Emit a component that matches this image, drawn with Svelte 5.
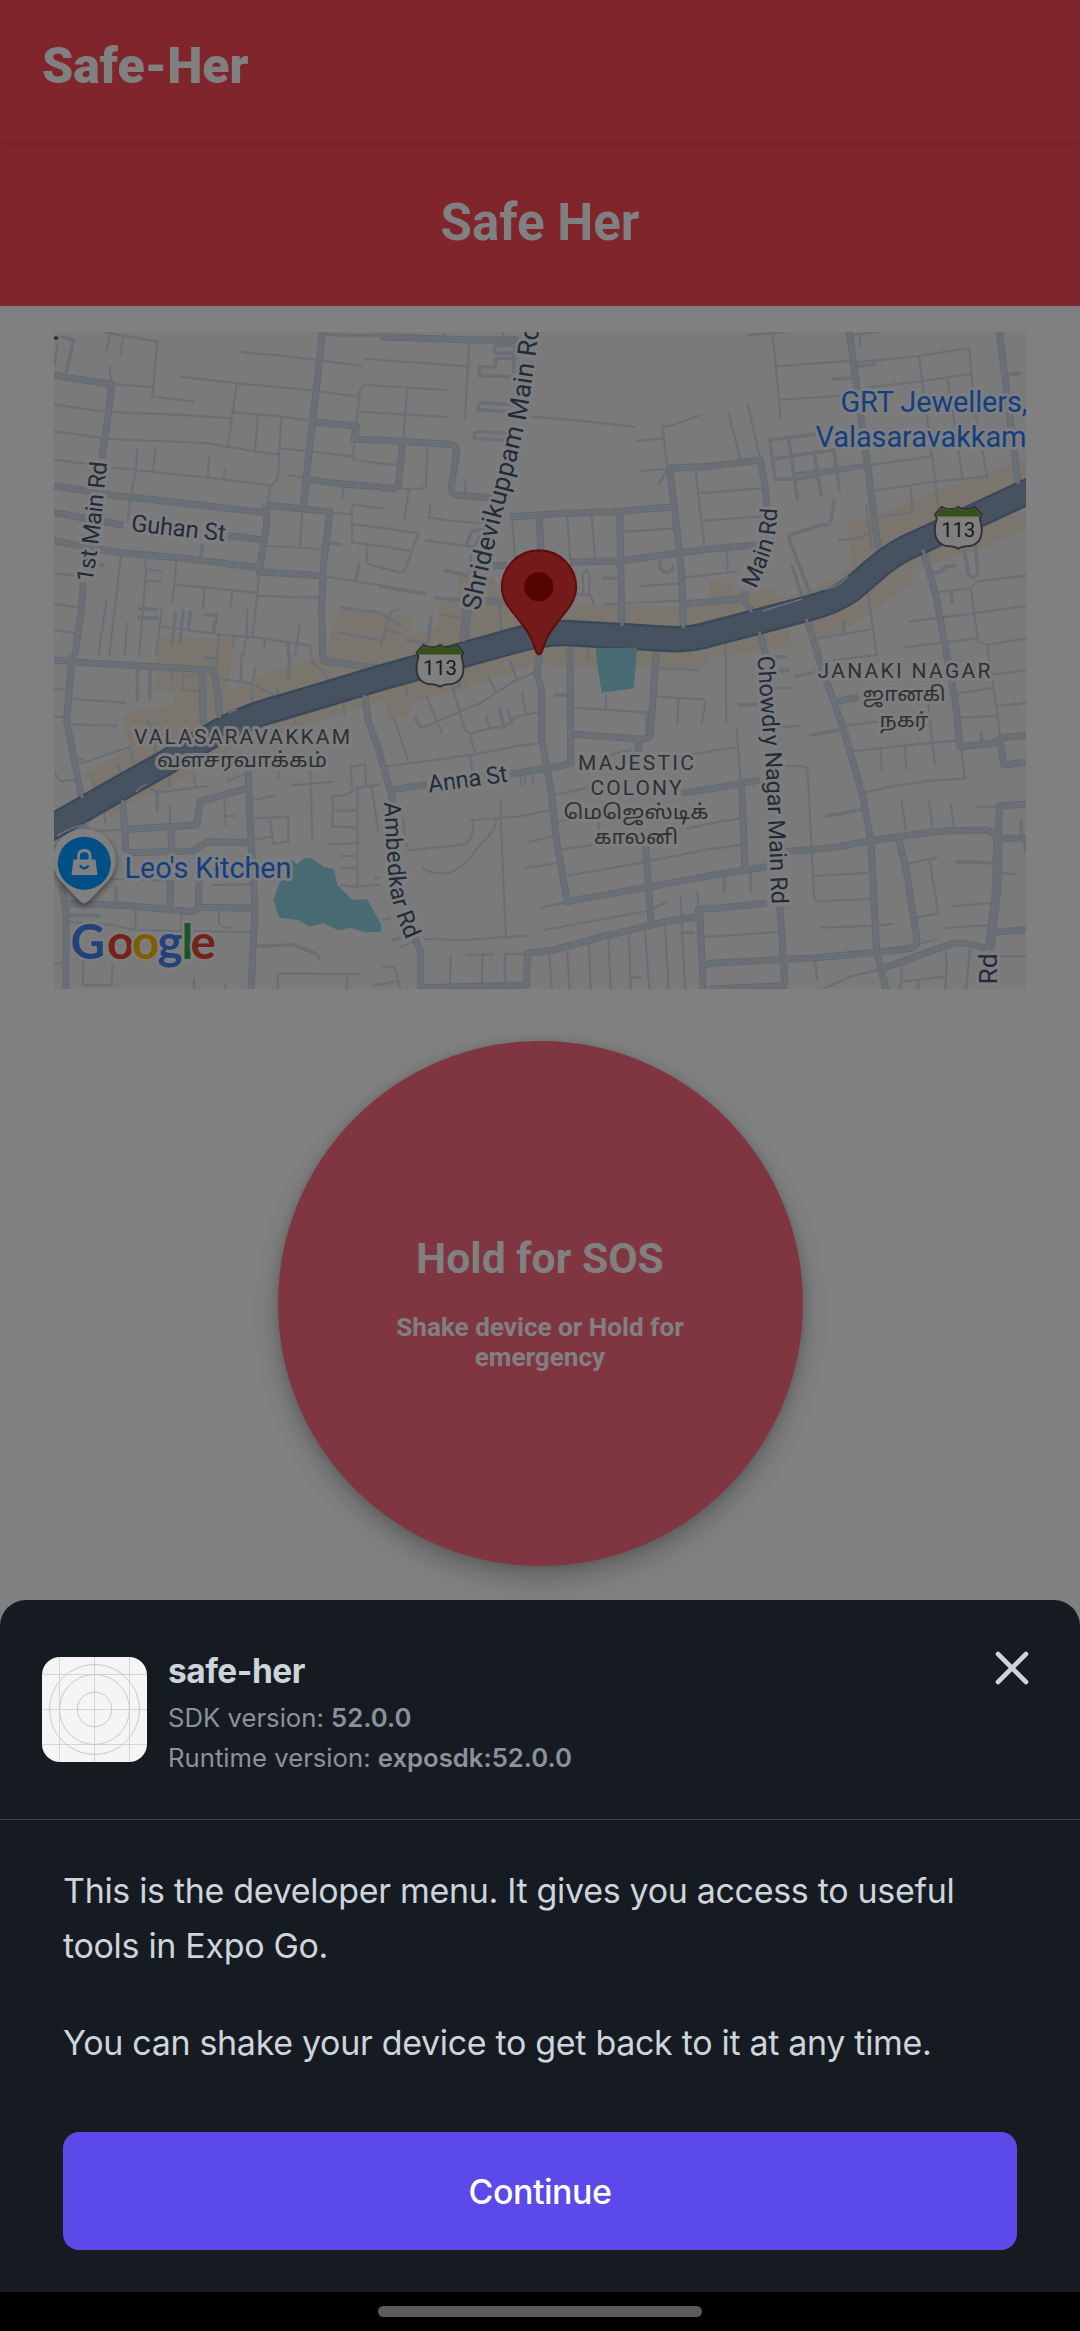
<script>
  // Street geometry, stored per map tile. Each tile is 330px wide and drawn on a 3x grid.
  const tiles = [
    {
      x: 50, y: 325,
      major: 'M12 148L60 160L185 177L175 270L155 400M100 775L95 850L75 990M818 20L795 230L775 400L760 550M12 482L200 512L400 535L650 563M12 563L220 600M535 632L640 645M12 648L200 682L400 700L628 728M648 540L840 560L820 720L815 850L818 992M648 540L650 600L628 740L815 752M785 290L920 303L912 343L990 346M770 462L850 475L990 485',
      mid: 'M818 28L930 32L990 30M35 35L70 45L50 140M838 655L872 658M926 718L918 770M457 662L450 700M268 852L320 853M266 877L320 880M377 865L365 960M399 858L390 955M421 862L415 915M468 870L500 870L490 925M150 720L160 721M715 950L715 990',
      minor: 'M165 22L180 25L322 50L307 215L430 229M180 25L170 75M219 35L211 88M178 123L185 175M195 178L305 186M22 60L14 120M568 81L700 92L935 123M391 155L560 175L780 195L928 216M990 182L940 180L930 195L918 300M947 102L990 104M928 260L990 264M560 175L545 280L533 368M12 238L160 260L420 271L545 280M552 262L700 275L780 288M624 270L615 378M693 278L685 440Q680 478 660 480L655 530M12 319L180 342L465 354L620 380L683 389M690 370L780 379L910 395M912 350L910 405L990 415M12 404L120 418M190 428L400 450L660 480M262 370L257 440L243 510L232 590M317 371L309 438M477 400L473 458M524 430L519 464M713 450L765 458M880 490L876 520M756 565L750 668M650 663L820 672M840 563L903 567M990 550L915 540Q905 540 905 560L907 652L990 664M907 598L990 607M952 660L950 715L990 727M828 755L990 780M12 745L85 752M213 690L195 850L178 990M286 700L288 740L268 990M290 733L335 738M288 767L333 770M380 708L367 832M372 778L620 803M462 790L460 850M547 800L541 845M628 745L608 935M625 813L805 818M12 836L85 847M12 915L75 925M170 823L145 990M231 895L225 990M336 847L318 990M327 903L520 930L620 938L780 962L782 990M592 850L590 930L580 990M508 928L500 990M553 930L549 965M645 940L643 970M750 898L735 990M873 848L990 863M867 922L990 947'
    },
    {
      x: 380, y: 325,
      major: 'M0 35L270 45L415 45M0 345L200 358Q235 360 230 380L213 490Q215 510 250 512L340 518M68 355L55 480Q50 492 30 490L0 488M390 575L560 565L700 560L885 545M862 430L990 424M868 430L885 560L905 750L910 902M477 570L483 680M719 565L722 700L725 898M340 722L380 720M570 712L720 707L900 683L990 672M320 828L380 828M990 830L915 836M258 850L248 950M264 850L254 950M570 960L570 992M828 975L828 992',
      mid: 'M415 60L355 60Q342 62 342 75Q342 85 355 85L410 85M405 100L350 100L345 125L300 125L297 152L400 155M400 238L305 233Q292 240 294 255L400 260M380 325L290 320Q280 325 282 340L375 345M320 612L275 618L260 660M198 737L260 750M0 783L135 807M165 818L240 825M670 760L715 760M839 708Q838 742 860 742Q878 742 878 725M152 880L145 950M80 945L140 957M405 60L400 140',
      minor: 'M0 105L268 124M268 50L255 278M0 183L205 195M82 188L70 345M0 264L198 276M452 275L600 287L763 306M960 271L878 300L848 305L862 425M770 348L848 340M780 438L862 432L835 480M142 370L138 480Q135 492 110 492L65 490M87 492L73 585M257 470L255 500M0 415L55 420M0 550L8 550M151 535L147 577L210 587L300 595M138 647L280 665M0 607L115 625L75 735Q68 745 50 740L0 728M0 663L93 678M310 615L275 680L268 740M397 585L405 700M562 575L570 700M635 570L645 695M735 620L885 610M947 435L960 560L973 660M958 503L990 503M970 587L990 587M780 784L895 775M912 757L990 750M670 838L900 827M610 810L608 750Q618 722 628 750L628 810M590 808L632 812L643 840M358 838L365 920M180 868L240 878M0 865L65 900M0 970L30 870Q35 855 55 855M15 915L60 925M628 960L620 990M930 970L930 990M193 22L193 30M370 22L370 35'
    },
    {
      x: 710, y: 325,
      major: 'M0 424L150 405L165 480L170 545M0 672L140 660M418 20L450 260L470 400L505 672M868 20L890 200L924 472M0 830L100 820L125 860M110 800L100 820M640 675L680 820L710 992M290 880L325 992M148 920L168 992',
      mid: 'M370 162L425 160M440 125L495 118M315 328L180 345L195 463L260 463L460 425M190 402L310 383L370 375M235 335L262 520M312 380L333 510M372 375L388 495M250 448L460 420M372 525Q365 595 355 600L330 600L245 628Q232 632 240 650L303 812M247 725L278 820M895 150L928 145M670 745L695 740L705 725L733 722M762 670L775 745Q790 770 803 745L797 665M722 797L726 832M400 890L402 925',
      minor: 'M115 30L185 25L230 20M188 28L205 200L211 280M203 124L420 107M440 112L627 93L777 69L785 150L800 290L832 455L673 470L492 498M213 224L385 213M450 35L450 60M430 30L505 20M627 93L650 270L685 545M480 187L635 168L785 147M712 157L735 300L757 460M57 268L90 400M113 238L150 400M485 420L660 395M601 483L608 555L600 563L510 574M485 670L468 540L480 532M387 646L450 637L490 615M0 502L155 490M0 585L160 574M50 680L53 742M0 748L80 740M473 795L500 990M325 940L490 912M683 803L780 790L800 770L948 752M600 889L790 865L948 842M782 790L805 950L832 960L948 940M583 967L800 940M832 958L833 990M47 950L46 990'
    },
    {
      x: 50, y: 655,
      major: 'M12 15L130 25L490 45L505 120L508 185M455 45L460 205M66 0L50 200L95 430M820 -2L823 18L980 38M943 118L955 200L992 300M218 435L228 590M232 523L440 510L450 440L590 400M595 350L600 500L615 760L603 1002M232 593L430 588L470 560L600 562M362 510L366 590M362 675L360 765M447 675L445 765M45 745L240 752L430 770L450 757L620 760M35 690L48 760L48 1002M818 -2L820 10',
      mid: 'M262 45L263 135M300 45L299 130M720 0L715 75M320 410L322 465M198 697L198 745M60 780L148 782M625 873L730 870L770 885Q805 895 808 912M60 520L110 512L118 535',
      minor: 'M12 102L45 104M66 132L225 143M65 208L200 212M12 184L45 187M12 350L30 378L75 375M365 45L365 80M400 50L398 105L445 108M400 65Q435 65 437 52M465 8L500 10M505 -5L495 40M575 -5L572 75M510 70L600 85L670 120M577 50L568 85M617 38L607 90M785 0L790 25L820 50L838 80M680 95L685 120M95 325L240 275L255 340M205 330L215 360M83 315L100 312M128 380L140 408M292 193L320 290M607 112L607 145M735 178L735 205M880 135L883 178M302 400Q320 415 345 410L470 393M432 360L437 395M358 365L358 395M532 376L590 357M685 350L685 373M359 455L360 510M524 432L526 510M526 483L555 483M612 435L672 422M613 490L715 485L715 560L670 566L660 490M612 554L665 545M145 527L225 525M163 468L165 500M728 391L850 380M781 350L787 552M905 395L902 335L945 328L948 392M990 388L920 400L885 420L848 425L847 515L923 518M922 400L922 690M847 467L920 467M965 395L985 530M838 568L928 564M873 603L922 603M873 638L922 640M875 690L910 695L990 690M975 670L990 668M487 690L600 688M185 672L355 678M60 800L190 810L250 825L620 832M256 768L256 825M395 780L393 830M507 765L507 805Q510 815 545 820M683 1002L683 955L930 957M893 955L890 1002M12 925L48 925M100 920L99 990L185 990L187 930M432 972L432 1002M525 990L525 1002M975 990L990 988'
    },
    {
      x: 380, y: 655,
      major: 'M0 300L35 420L38 450M33 405L140 388M390 357L490 343L572 325L570 -2M480 0L470 50L485 110L485 250L515 420L530 560L562 740L800 697L992 662M582 238L780 252Q815 255 812 230L828 -2M775 255L775 290M797 575L813 800M905 415L992 400M105 850L122 890L122 998L440 990L442 895L520 885L680 842L880 795L960 785L970 1002M960 785L955 765L992 758M975 930L992 925',
      mid: 'M360 162L370 215M802 170L800 235M525 120L565 120M105 190L122 215L140 213M905 835L940 832M40 855L60 850',
      minor: 'M75 85L82 125M138 122L185 233M40 185L85 320M15 335L285 298L400 275L475 265M140 213L300 145L400 80L465 52M322 60L348 112M388 15L410 72M240 70L238 95L218 100L255 225L268 235L345 217L375 217L410 185L475 172M427 113L437 178M382 165L395 205M318 183L328 220M268 235L287 298M270 305L277 345M620 0L623 15M583 158L800 172M678 120L677 165M835 40L955 45M833 125L972 133L975 150L965 205M895 130L892 208M528 420L620 398M690 300L750 285M925 300L990 290M420 362L425 390M435 360L435 385M457 360L460 382M362 435L362 490L378 850M272 495L350 490L415 485L505 467M280 500Q280 560 250 568L100 585Q80 590 78 560M347 490Q355 515 310 560Q280 590 270 610Q220 660 190 655Q150 655 128 640M70 490L75 540M450 561L520 543M438 638L530 625M487 757L555 742M535 500L560 495M545 583L635 570M565 662L800 620L990 582M493 825L800 768L858 742M655 500L657 520M925 520L990 505M133 852L250 855L436 842M62 875L100 862M260 900L340 898M212 908L210 990M308 900L305 990M375 985L375 898L435 897M10 935Q45 930 48 950L60 1000M0 988L50 978M10 795L30 788M508 895L515 1002M562 890L568 1002M627 870L632 1002M685 850L692 1002M747 838L752 1002M752 968L782 967M795 828L808 1002M855 812L866 1002M902 728L905 790L915 1002M952 710L957 760M975 845L990 845'
    },
    {
      x: 710, y: 655,
      major: 'M0 403L90 385L150 375M95 390L105 645M0 662L170 635M0 762L170 745M322 -2L350 80L400 220L460 430L483 560L500 890L528 1004M375 140L445 128M225 590L370 578L480 558L600 540L700 528L830 525L860 540M210 755L225 990M0 925L320 908L500 892L600 880Q625 872 620 850L590 650L565 550M0 1002L230 992M520 940L720 868Q750 855 830 880M710 -2L735 130L750 275L850 265L880 248L950 240M870 260L882 330L950 322M950 448L868 452L865 550L950 550M860 540L857 700L835 885M867 540L864 700L842 885M860 830L950 825',
      mid: 'M87 150L140 147M195 5L228 5M200 48L235 46M303 240L385 226M350 484L455 464M43 668L43 708M121 655L122 705M813 235L816 260M933 500L934 535M945 560L946 590M740 620L845 623',
      minor: 'M48 0L49 200M80 218L92 380M0 288L80 278M195 100L245 98M205 217L270 212M0 505L90 490M0 583L90 570M222 333L275 333Q293 335 293 355L305 580L312 725Q315 738 330 738L485 732M310 663L480 653M255 65L340 45M370 15L500 0M405 212L500 200M425 289L600 270L740 257M512 280L515 350M584 272L590 342M655 150L675 328M753 285L765 370L650 378L560 392L465 412M745 115L850 98M835 0L850 90L870 240M850 58L948 45M860 153L948 144M753 187L862 183M575 440L588 525M658 442L668 520M722 447L732 515M798 456L865 454M595 626L680 608M658 613L684 765Q684 775 670 778L620 788M880 655L917 657M725 753L840 745M700 819L835 811M333 818L500 812L548 807M635 865L672 854M0 845L205 831M315 920L322 975M340 1002L420 965L505 945M573 930L575 965L570 1002M573 980L705 965M625 978L625 1002M706 890L710 930L706 1002M780 880L768 1002M870 904L948 904'
    }
  ];

  const highway = 'M40 834L117 790L167 762Q195 745 220 731Q250 715 283 707L380 678L513 641Q545 632 567 633L670 639Q690 640 710 634L810 608Q836 601 852 589L880 565Q897 551 917 543L1040 486';

  const shields = [
    { x: 440, y: 657.5 },
    { x: 958.3, y: 519.5 }
  ];

  const areas = [
    { text: 'VALASARAVAKKAM', x: 242, y: 743.5, w: 216 },
    { text: 'MAJESTIC', x: 636, y: 770, w: 116 },
    { text: 'COLONY', x: 636, y: 794.5, w: 91 },
    { text: 'JANAKI NAGAR', x: 904, y: 678, w: 173 }
  ];
  const tamil = [
    { text: 'வளசரவாக்கம்', x: 242, y: 767, w: 170 },
    { text: 'மெஜெஸ்டிக்', x: 636, y: 819, w: 145 },
    { text: 'காலனி', x: 636, y: 844, w: 84 },
    { text: 'ஜானகி', x: 904, y: 701, w: 83 },
    { text: 'நகர்', x: 904, y: 727, w: 49 }
  ];
  const streets = [
    { id: 'first', text: '1st Main Rd', d: 'M92.5 583Q99 540 101.5 515Q105 485 108 450', size: 23.5, w: 122 },
    { id: 'guhan', text: 'Guhan St', d: 'M130.5 531L230 542', size: 24, w: 95 },
    { id: 'shri', text: 'Shridevikuppam Main Rd', d: 'M479.5 611Q488 570 501 518Q518 455 526 418Q534 372 544 290', size: 26, w: 291 },
    { id: 'main', text: 'Main Rd', d: 'M756 589Q766 568 773 544Q777 530 777.5 500', size: 23.5, w: 84 },
    { id: 'anna', text: 'Anna St', d: 'M429 792.5L520 780', size: 24, w: 80 },
    { id: 'amb', text: 'Ambedkar Rd', d: 'M384 802Q386 850 389 880Q391 910 411 950', size: 23.5, w: 141 },
    { id: 'chow', text: 'Chowdry Nagar Main Rd', d: 'M757.5 656Q761 715 765.5 760Q769 830 772 915', size: 23.5, w: 249 }
  ];
</script>

<div class="screen">
  <header class="appbar">Safe-Her</header>
  <div class="banner">Safe Her</div>

  <main>
    <svg class="map" viewBox="54 332 972 657" width="972" height="657">
      <defs>
        {#each streets as s}
          <path id={s.id} d={s.d} />
        {/each}
        <filter id="soft" x="-30%" y="-30%" width="160%" height="160%">
          <feDropShadow dx="0" dy="3" stdDeviation="3" flood-color="#000" flood-opacity="0.5" />
        </filter>
      </defs>
      <rect x="54" y="332" width="972" height="657" fill="#7a7a7a" />

      <g class="built">
        <path d="M158 638L232 638L232 655L228 690L275 670L327 655L332 628L343 607L380 613L412 618L410 635L437 628L441 600L458 600L458 575L495 578L500 602L710 607L710 580L730 584L735 592L773 588L780 600L800 592L832 580L852 565L848 522L880 515L943 488L1026 458L1026 495L870 580L700 640L540 640L300 705L100 795L84 775L130 748L122 718L130 712L174 705L174 692L155 692Z" />
        <path d="M112 819L105 808L300 700L560 632L720 634L870 590L930 545L1026 510L1026 528L987 546L910 571L913 582L857 622L818 640L808 622L788 628L793 647L710 658L704 668L560 666L538 664L470 686L410 705L411 715L388 721L385 700L232 748L160 792L122 805Z" />
      </g>
      <g class="water">
        <path d="M291.7 860L296.7 864.3L305 857.7L311.7 858.3L323.3 866.7L334 869L337.3 885L352.7 900L366.7 899L381 924L381 932L365 932.3L350 927.7L338.3 930.3L323.3 923.3L309.3 926.7L298.3 920L279.3 917.7L273.3 900L280 881.7L291.7 876.7Z" />
      </g>

      {#each tiles as t}
        <g transform="translate({t.x} {t.y}) scale(0.33333)">
          <path class="road minor" d={t.minor} />
          <path class="road mid" d={t.mid} />
          <path class="road casing" d={t.major} />
          <path class="road major" d={t.major} />
        </g>
      {/each}

      <path d={highway} fill="none" stroke="#3a4859" stroke-width="26.5" />
      <path d={highway} fill="none" stroke="#46525f" stroke-width="22" />
      <path d="M596 648L637 648L634 688.3L601.6 692.6L596 655Z" class="water" />
      <g class="stub">
        <path d="M463 630L463.500 642M621.500 610L622 626M683 605L683.500 628M1017.500 470L1018 484M877 535L878 549M81 785L82 798M219 700L219.500 718M201 700L203 724M364 695L365 705M806 619L809 627M759 632L762 640M923 550L926 560M747 602L751.500 612M122.500 800L124 810" />
      </g>
      <path d="M136 792Q142 785 148 784M229 714Q232 710 237 710M57 836Q70 828 82 825M762 611L802 599M820 590Q840 587 848 576" class="ramp" />

      {#each streets as s}
        <text class="street" font-size={s.size}><textPath href="#{s.id}" textLength={s.w}>{s.text}</textPath></text>
      {/each}
      <text class="street" font-size="26.5" transform="translate(996.500 984.500) rotate(-90)">Rd</text>
      <path d="M54 338H58" stroke="#20262f" stroke-width="3" />

      {#each areas as a}
        <text class="area" x={a.x} y={a.y} textLength={a.w} text-anchor="middle">{a.text}</text>
      {/each}
      {#each tamil as a}
        <text class="area tamil" x={a.x} y={a.y} textLength={a.w} lengthAdjust="spacingAndGlyphs" text-anchor="middle">{a.text}</text>
      {/each}

      <text class="place" x="840.500" y="412" textLength="187">GRT Jewellers,</text>
      <text class="place" x="815.500" y="446.500" textLength="211">Valasaravakkam</text>
      <text class="place" x="124.500" y="877.800" textLength="167">Leo's Kitchen</text>

      {#each shields as s}
        <g transform="translate({s.x} {s.y}) scale(0.33333)">
          <path d="M0 -38Q-10 -30 -22 -31Q-36 -30 -50 -38L-70 -15Q-63 -8 -66 4Q-72 22 -70 40Q-68 72 -35 80Q-12 79 0 88Q12 79 35 80Q68 72 70 40Q72 22 66 4Q63 -8 70 -15L50 -38Q36 -30 22 -31Q10 -30 0 -38Z" fill="#7f7f7f" stroke="#303030" stroke-width="5.500" />
          <path d="M0 -35Q-10 -27 -22 -28Q-36 -27 -49 -34L-66 -15Q-61 -10 -62 -9H62Q61 -10 66 -15L49 -34Q36 -27 22 -28Q10 -27 0 -35Z" fill="#365019" />
          <text x="0" y="51" text-anchor="middle" font-size="61" textLength="102" fill="#191919">113</text>
        </g>
      {/each}

      <g filter="url(#soft)">
        <path d="M84.300 903.500Q80 902 76 897L60 880A31.300 31.300 0 1 1 108.600 880L92.500 897Q88.500 902 84.300 903.500Z" fill="#7f7f7f" />
      </g>
      <circle cx="84.300" cy="863.300" r="26.500" fill="#004f87" />
      <path d="M73.500 859.500H95.500L97.500 875H71.500Z" fill="#808080" />
      <path d="M78.500 861V856Q78.500 850.500 84.300 850.500Q90 850.500 90 856V861" fill="none" stroke="#808080" stroke-width="2.800" />
      <path d="M80 865.500Q84.300 871 88.600 865.500" fill="none" stroke="#004f87" stroke-width="2.500" />

      <path d="M539 654.500Q536.800 654.500 535.500 650C531 634 524 627 514 614Q501.700 600 501.700 587.500A37.300 37.300 0 0 1 576.300 587.500Q576.300 600 564 614C554 627 547 634 542.500 650Q541.200 654.500 539 654.500Z" fill="#751a1a" stroke="#5d0b0c" stroke-width="1.800" />
      <circle cx="538.800" cy="586.800" r="14.500" fill="#560404" />

      <text class="google" y="958.500">
        <tspan x="70.500" fill="#21427b">G</tspan><tspan x="107" fill="#75221b">o</tspan><tspan x="132" fill="#7d5e03">o</tspan><tspan x="157.500" fill="#21427b">g</tspan><tspan x="181.500" fill="#1a542a">l</tspan><tspan x="190.500" fill="#75221b">e</tspan>
      </text>
    </svg>

    <button class="sos">
      <span class="sos-title">Hold for SOS</span>
      <span class="sos-note">Shake device or Hold for emergency</span>
    </button>
  </main>

  <section class="sheet">
    <div class="app">
      <svg class="icon" viewBox="0 0 105 105" width="105" height="105">
        <rect width="105" height="105" fill="#f5f5f7" />
        <g fill="none" stroke="#d5d5d8" stroke-width="1">
          <path d="M17.500 0V105M52.500 0V105M87.500 0V105M0 17.500H105M0 52.500H105M0 87.500H105" />
          <g stroke="#c9c9cc">
            <circle cx="52.500" cy="52.500" r="17.200" />
            <circle cx="52.500" cy="52.500" r="35" />
            <circle cx="52.500" cy="52.500" r="45" />
          </g>
        </g>
      </svg>
      <div class="info">
        <h1>safe-her</h1>
        <p>SDK version: <b>52.0.0</b></p>
        <p>Runtime version: <b>exposdk:52.0.0</b></p>
      </div>
      <svg class="close" viewBox="0 0 36 36" width="36" height="36">
        <path d="M4 4L32 32M32 4L4 32" fill="none" stroke="#cdd4db" stroke-width="4.600" stroke-linecap="round" />
      </svg>
    </div>
    <div class="body">
      <p>This is the developer menu. It gives you access to useful tools in Expo Go.</p>
      <p>You can shake your device to get back to it at any time.</p>
      <button class="continue">Continue</button>
    </div>
    <footer><div class="pill"></div></footer>
  </section>
</div>

<style>
  :global(body) { margin: 0; background: #808080; }
  * { box-sizing: border-box; }
  button { border: 0; padding: 0; font: inherit; color: inherit; }
  .screen {
    position: relative;
    width: 1080px;
    height: 2331px;
    overflow: hidden;
    background: #808080;
    font-family: Roboto, "Liberation Sans", sans-serif;
    color: #808080;
  }
  .appbar {
    position: relative;
    height: 141px;
    padding: 36px 42px 0;
    background: #80252c;
    box-shadow: 0 1px 8px rgba(0, 0, 0, 0.16);
    font-size: 50px;
    line-height: 60px;
    font-weight: 900;
  }
  .banner {
    height: 165px;
    background: #80252c;
    text-align: center;
    font-size: 51px;
    font-weight: 700;
    line-height: 164px;
  }
  main {
    display: flex;
    flex-direction: column;
    align-items: center;
    padding-top: 26px;
    gap: 52px;
  }
  .map { display: block; }
  .road { fill: none; stroke-linejoin: round; stroke-linecap: round; stroke: #696f74; }
  .minor { stroke-width: 6.5; }
  .mid { stroke-width: 10.5; }
  .casing { stroke-width: 21; stroke: #62686e; stroke-linecap: butt; }
  .major { stroke-width: 17.5; stroke: #6a6e75; stroke-linecap: butt; }
  .built { fill: #7b766d; }
  .water { fill: #486b73; }
  .stub { fill: none; stroke: #6a6e75; stroke-width: 3; }
  .ramp { fill: none; stroke: #69717a; stroke-width: 1.6; }
  text { font-family: Roboto, "Noto Sans Tamil", "Noto Sans", sans-serif; }
  .street, .area, .place {
    paint-order: stroke;
    stroke: #7c7d7e;
    stroke-width: 6px;
    stroke-linejoin: round;
  }
  .street { fill: #222b37; }
  .area { fill: #2e3031; font-size: 21px; }
  .tamil { font-size: 20px; }
  .place { fill: #133e80; font-size: 29px; }
  .google {
    font-family: Lato, sans-serif;
    font-size: 47.5px;
    font-weight: 700;
    paint-order: stroke;
    stroke: #7e7e7e;
    stroke-width: 5px;
    stroke-linejoin: round;
  }
  .sos {
    width: 525px;
    height: 525px;
    padding-bottom: 2px;
    border-radius: 50%;
    background: #803641;
    box-shadow: 0 12px 24px rgba(0, 0, 0, 0.24), 0 0 10px rgba(0, 0, 0, 0.12);
    display: flex;
    flex-direction: column;
    align-items: center;
    justify-content: center;
    gap: 29px;
    font-weight: 700;
  }
  .sos-title { font-size: 42.7px; line-height: 50px; }
  .sos-note { width: 340px; font-size: 26.1px; line-height: 30px; text-align: center; }
  .sheet {
    position: absolute;
    left: 0;
    right: 0;
    top: 1600px;
    bottom: 0;
    display: flex;
    flex-direction: column;
    border-radius: 26px 26px 0 0;
    overflow: hidden;
    background: #161b22;
    font-family: Inter, "Liberation Sans", sans-serif;
    color: #cdd4db;
  }
  .app {
    display: flex;
    height: 220px;
    padding: 50px 50px 0 42px;
    border-bottom: 1px solid #3c424a;
  }
  .icon { margin-top: 7px; border-radius: 18px; }
  .info { flex: 1; padding-left: 21px; }
  h1 { margin: 0; font-size: 33.5px; line-height: 42px; font-weight: 700; letter-spacing: -0.5px; }
  .info p { margin: 0; padding-top: 6px; font-size: 25.7px; line-height: 34px; color: #8b929e; }
  h1 + p { margin-top: 3px !important; }
  b { font-weight: 600; }
  .body {
    flex: 1;
    display: flex;
    flex-direction: column;
    padding: 43px 63px 42px;
  }
  .body p { margin: 0 0 42px; font-size: 34px; line-height: 55px; letter-spacing: -0.32px; }
  .continue {
    margin-top: auto;
    height: 118px;
    border-radius: 16px;
    background: #5b49ea;
    color: #fff;
    font-size: 34px;
    font-weight: 500;
    letter-spacing: -0.5px;
  }
  footer {
    height: 39px;
    display: flex;
    justify-content: center;
    align-items: center;
    background: #000;
  }
  .pill { width: 324px; height: 11px; border-radius: 6px; background: #5c5c5c; }
</style>
